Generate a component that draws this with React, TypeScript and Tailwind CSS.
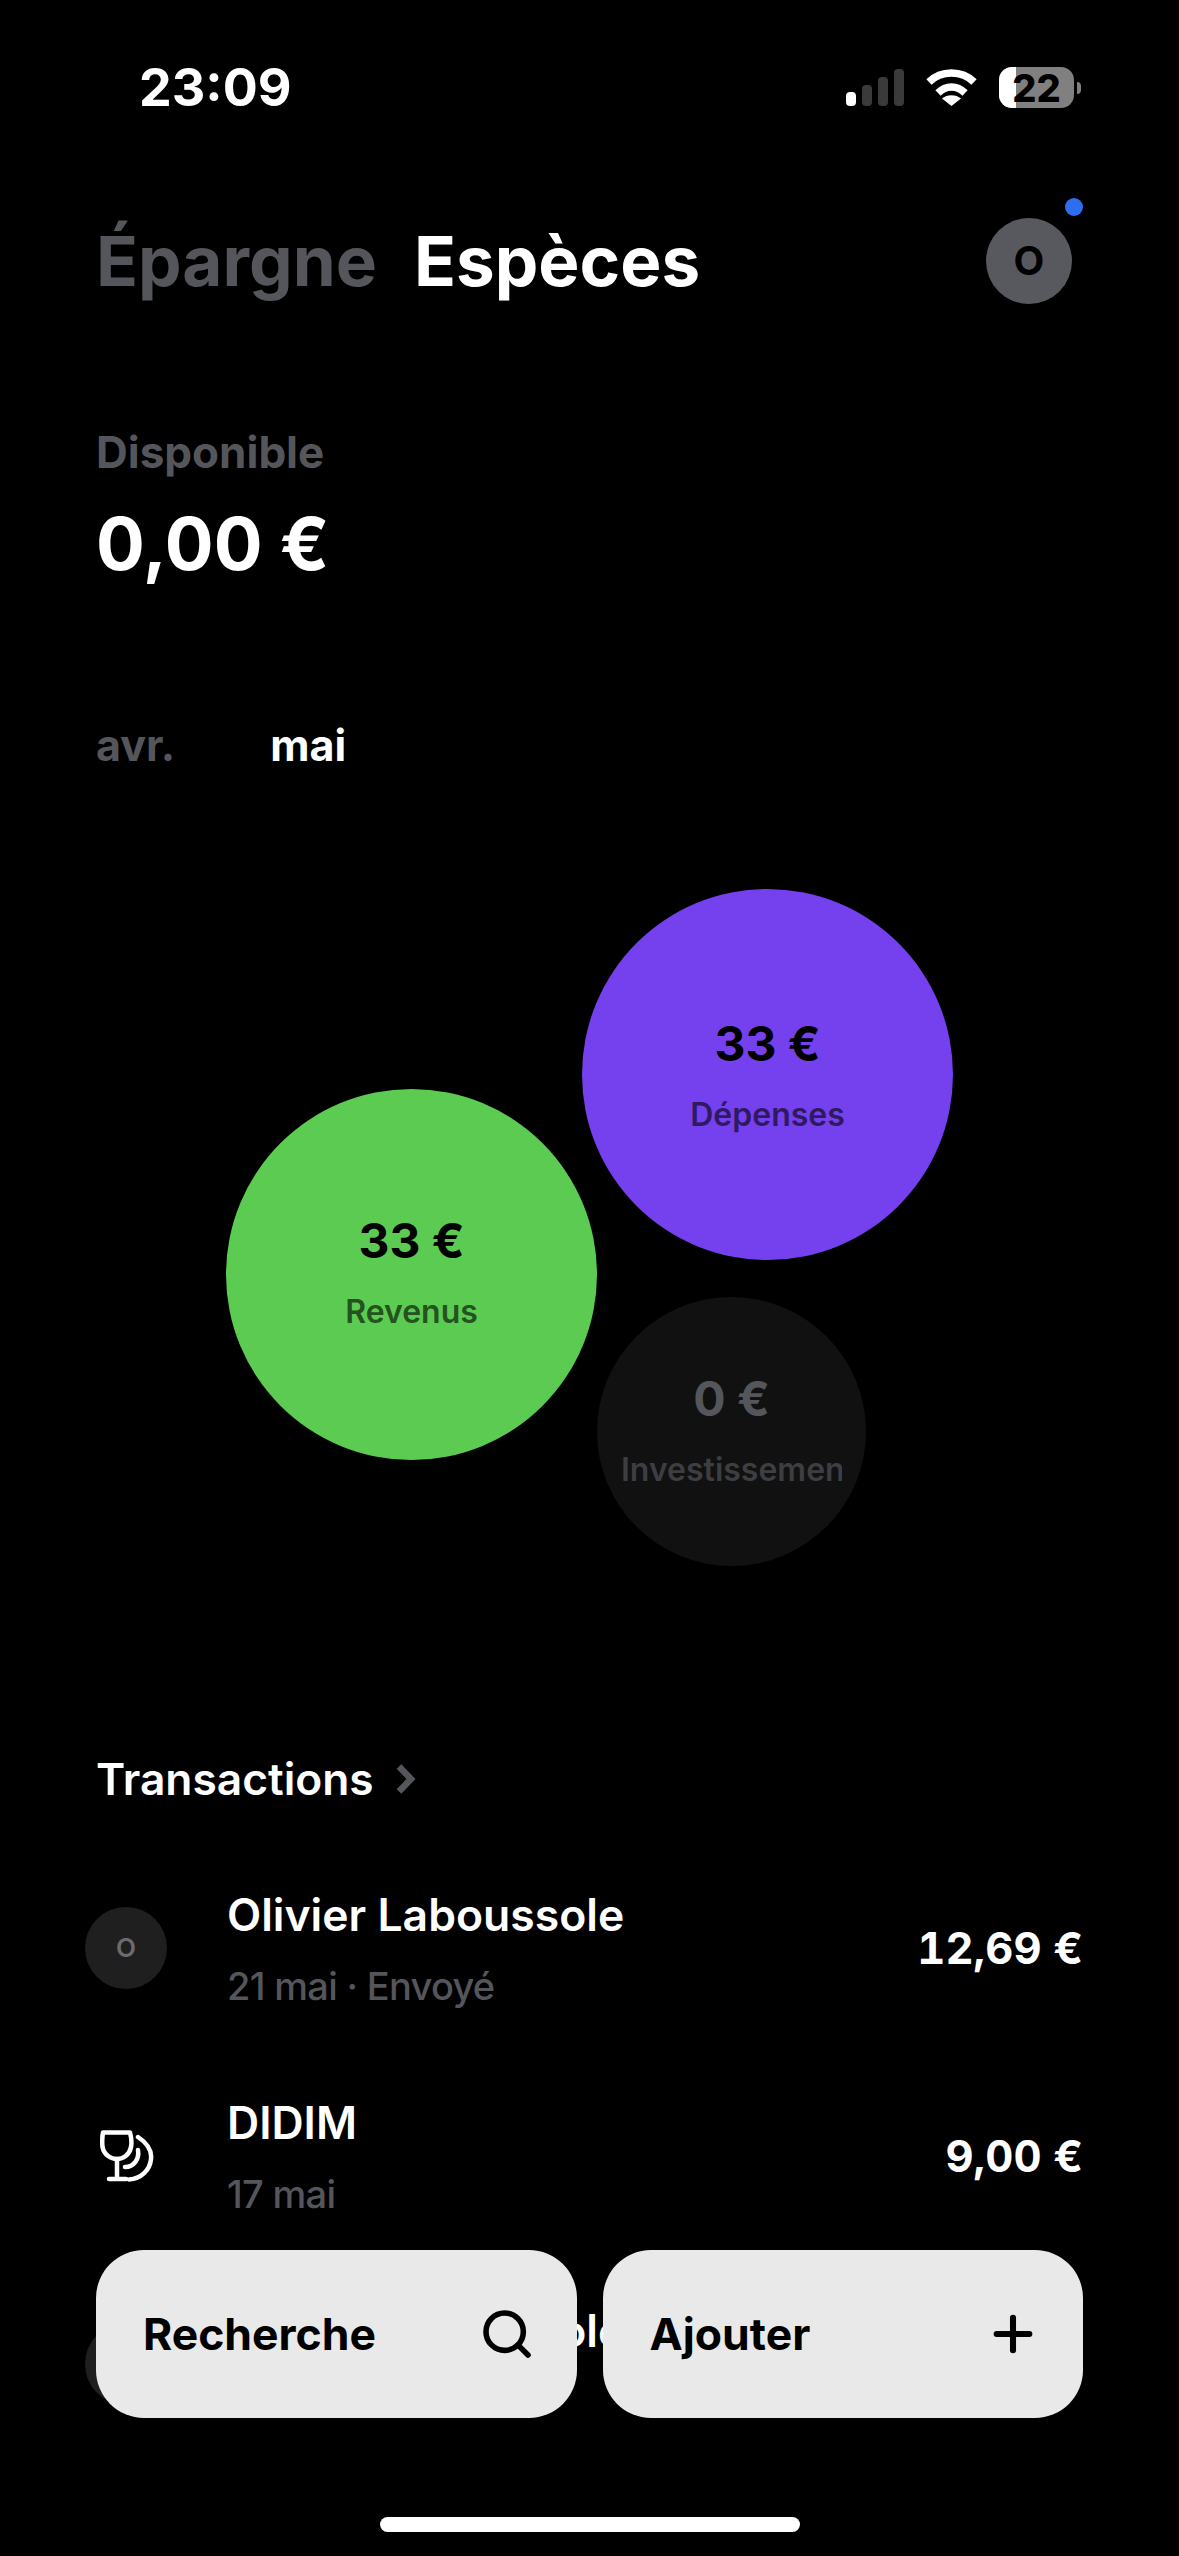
import React from "react";
import { Search, Plus } from "lucide-react";

const font = { fontFamily: "Inter, 'Liberation Sans', sans-serif" };

function StatusBar() {
  return (
    <div className="flex h-[70px] items-start justify-between pl-[139px] pr-[98px] pt-[58px]">
      <span className="text-[52px] font-bold leading-[60px] text-white">23:09</span>
      <div className="flex items-center gap-[22px] pt-[9px]">
        <svg width="58" height="37" viewBox="0 0 58 37">
          <rect x="0" y="23" width="10" height="14" rx="4" fill="#fff" />
          <rect x="16" y="16" width="10" height="21" rx="4" fill="#3a3a3a" />
          <rect x="32" y="8" width="10" height="29" rx="4" fill="#3a3a3a" />
          <rect x="48" y="0" width="10" height="37" rx="4" fill="#3a3a3a" />
        </svg>
        <svg width="51" height="37" viewBox="0 0 51 37">
          <path d="M3 13C15 1 36 1 48 13" fill="none" stroke="#fff" strokeWidth="7.500" />
          <path d="M12 24C20 16 31 16 39 24" fill="none" stroke="#fff" strokeWidth="7.500" />
          <path d="M25.500 37L16 29.500C21 25 30 25 35 29.500Z" fill="#fff" />
        </svg>
        <div className="flex items-center gap-[3px]">
          <div className="relative flex h-[41px] w-[75px] items-center justify-center overflow-hidden rounded-[13px] bg-[#808080]">
            <div className="absolute inset-y-0 left-0 w-[17px] bg-white" />
            <span className="relative text-[38px] font-extrabold leading-none text-black">22</span>
          </div>
          <div className="h-[12px] w-[4px] rounded-r-full bg-[#808080]" />
        </div>
      </div>
    </div>
  );
}

function Circle({ className, amount, label, amountColor, labelColor, clip }: { className: string; amount: string; label: string; amountColor: string; labelColor: string; clip?: boolean }) {
  return (
    <div className={`absolute flex flex-col items-center overflow-hidden rounded-full ${className}`}>
      <span className={`text-[48px] font-bold leading-[58px] ${amountColor}`}>{amount}</span>
      <span className={`mt-[22px] text-[32px] font-semibold leading-[40px] whitespace-nowrap ${clip ? "w-[221px] overflow-hidden" : ""} ${labelColor}`}>{label}</span>
    </div>
  );
}

function WineIcon() {
  return (
    <svg width="54" height="52" viewBox="0 0 54 52" fill="none" stroke="#fff" strokeWidth="4.500" strokeLinecap="round" strokeLinejoin="round">
      <path d="M3 2.500H30C31.500 8 32 12 31 17C29.500 25 23 29 17 29C11 29 4 25 2.500 17C2 12 2 8 3 2.500Z" />
      <path d="M17 29V48M9 49H26" />
      <path d="M38 7C47 13 52 21 51 29C50 40 41 49 29 49.500" />
      <path d="M38 20C39.500 29 34 37 25 37" />
    </svg>
  );
}

function Row({ icon, name, sub, amount }: { icon: React.ReactNode; name: string; sub: string; amount: string }) {
  return (
    <div className="flex h-[208px] items-center pr-[96px]">
      <div className="flex w-[228px] shrink-0 justify-start pl-[85px]">{icon}</div>
      <div className="ml-[-1px] flex flex-1 flex-col">
        <span className="text-[44.500px] font-semibold leading-[54px] text-white">{name}</span>
        <span className="mt-[21px] text-[38px] font-medium leading-[46px] tracking-[-0.7px] text-[#55565b]">{sub}</span>
      </div>
      <span className="text-[43.500px] font-bold leading-[54px] tabular-nums text-white">{amount}</span>
    </div>
  );
}

function ActionButton({ label, icon }: { label: string; icon: React.ReactNode }) {
  return (
    <div className="flex h-[168px] flex-1 items-center justify-between rounded-[48px] bg-[#e9e9e9] pl-[47px] pr-[42px]">
      <span className="text-[44.500px] font-bold leading-[56px] text-black">{label}</span>
      {icon}
    </div>
  );
}

export default function App() {
  return (
    <div style={font} className="relative h-[2556px] w-[1179px] overflow-hidden bg-black">
      <StatusBar />
      <div className="mt-[148px] flex items-center justify-between pl-[96px] pr-[107px]">
        <div className="flex gap-[37px] text-[69.200px] font-bold leading-[82px]">
          <span className="text-[#55565b]">Épargne</span>
          <span className="text-white">Espèces</span>
        </div>
        <div className="relative flex h-[86px] w-[86px] items-center justify-center rounded-full bg-[#58595e]">
          <span className="text-[40px] font-bold leading-none text-black">O</span>
          <div className="absolute right-[-11px] top-[-20px] h-[18px] w-[18px] rounded-full bg-[#2d6df0]" />
        </div>
      </div>

      <div className="mt-[123px] pl-[96px]">
        <div className="text-[44px] font-bold leading-[50px] text-[#55565b]">Disponible</div>
        <div className="mt-[21px] text-[72.500px] font-bold leading-[92px] text-white">0,00 €</div>
      </div>

      <div className="mt-[129px] flex gap-[95px] pl-[96px] text-[43px] font-bold leading-[52px]">
        <span className="text-[#55565b]">avr.</span>
        <span className="text-white">mai</span>
      </div>

      <div className="relative mt-[118px] h-[677px] w-full">
        <Circle className="left-[582px] top-0 h-[371px] w-[371px] bg-[#7540ee] pt-[126px]" amount="33 €" label="Dépenses" amountColor="text-black" labelColor="text-[#2f1a60]" />
        <Circle className="left-[226px] top-[200px] h-[371px] w-[371px] bg-[#5ccb52] pt-[123px]" amount="33 €" label="Revenus" amountColor="text-black" labelColor="text-[#255221]" />
        <Circle className="left-[597px] top-[408px] h-[269px] w-[269px] bg-[#111111] pt-[73px]" amount="0 €" label="Investissement" amountColor="text-[#55565b]" labelColor="text-[#3d3e42]" clip />
      </div>

      <div className="mt-[186px] flex items-center gap-[22px] pl-[96px]">
        <span className="text-[44.300px] font-semibold leading-[54px] text-white">Transactions</span>
        <svg width="22" height="30" viewBox="0 0 22 30" fill="none" stroke="#55565b" strokeWidth="6.500">
          <path d="M3 2.500L15 15L3 27.500" />
        </svg>
      </div>

      <div className="mt-[38px]">
        <Row
          icon={
            <div className="flex h-[82px] w-[82px] items-center justify-center rounded-full bg-[#1f1f1f]">
              <span className="text-[26px] font-semibold leading-none text-[#6b6c70]">O</span>
            </div>
          }
          name="Olivier Laboussole"
          sub="21 mai · Envoyé"
          amount="12,69 €"
        />
        <Row icon={<div className="pl-[15px]"><WineIcon /></div>} name="DIDIM" sub="17 mai" amount="9,00 €" />
        <Row
          icon={<div className="h-[82px] w-[82px] rounded-full bg-[#1f1f1f]" />}
          name="Olivier Laboussole"
          sub={"\u00a0"}
          amount=""
        />
      </div>

      <div className="absolute inset-x-0 bottom-[138px] flex gap-[26px] px-[96px]">
        <ActionButton label="Recherche" icon={<Search size={56} strokeWidth={2.400} color="#000" />} />
        <ActionButton label="Ajouter" icon={<Plus size={56} strokeWidth={2.600} color="#000" />} />
      </div>
      <div className="absolute bottom-[24px] left-[380px] h-[15px] w-[420px] rounded-full bg-white" />
    </div>
  );
}
